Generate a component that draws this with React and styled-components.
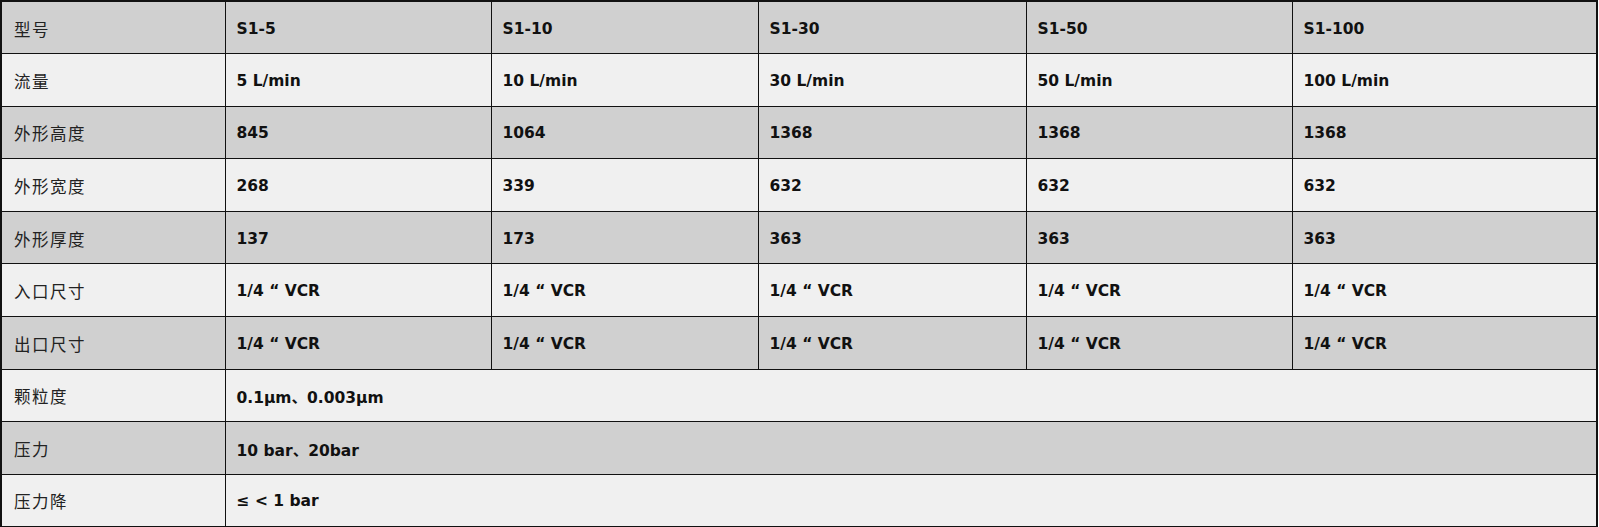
import React from "react";
import styled, { createGlobalStyle } from "styled-components";

const Global = createGlobalStyle`
  html, body { margin: 0; padding: 0; background: #ffffff; }
  body { font-family: "DejaVu Sans", "Noto Sans CJK SC", sans-serif; }
`;

const Table = styled.table`
  width: 1598px;
  height: 526px;
  table-layout: fixed;
  border-collapse: collapse;
  border: 2px solid #111;
`;

const Row = styled.tr`
  height: 52.6px;
  background: ${(p) => (p.$shade ? "#d0d0d0" : "#f0f0f0")};
`;

const Label = styled.td`
  border: 1.5px solid #111;
  padding: 2px 0 0 12px;
  font-size: 16.5px;
  letter-spacing: 1.5px;
  font-weight: 400;
  color: #222;
  font-family: "Noto Sans CJK SC", sans-serif;
  vertical-align: middle;
  white-space: nowrap;
`;

const Value = styled.td`
  border: 1.5px solid #111;
  padding: 2px 0 0 11px;
  font-size: 15.5px;
  font-weight: 700;
  color: #111;
  font-family: "DejaVu Sans", "Noto Sans CJK SC", sans-serif;
  vertical-align: middle;
  white-space: nowrap;
`;

const Col = styled.col`
  width: ${(p) => p.$w};
`;

const rows = [
  ["型号", ["S1-5", "S1-10", "S1-30", "S1-50", "S1-100"]],
  ["流量", ["5 L/min", "10 L/min", "30 L/min", "50 L/min", "100 L/min"]],
  ["外形高度", ["845", "1064", "1368", "1368", "1368"]],
  ["外形宽度", ["268", "339", "632", "632", "632"]],
  ["外形厚度", ["137", "173", "363", "363", "363"]],
  ["入口尺寸", ["1/4 “ VCR", "1/4 “ VCR", "1/4 “ VCR", "1/4 “ VCR", "1/4 “ VCR"]],
  ["出口尺寸", ["1/4 “ VCR", "1/4 “ VCR", "1/4 “ VCR", "1/4 “ VCR", "1/4 “ VCR"]],
  ["颗粒度", ["0.1μm、0.003μm"]],
  ["压力", ["10 bar、20bar"]],
  ["压力降", ["≤ < 1 bar"]],
];

export default function App() {
  return (
    <>
      <Global />
      <Table>
        <colgroup>
          <Col $w="224px" />
          <Col $w="266px" />
          <Col $w="267px" />
          <Col $w="268px" />
          <Col $w="266px" />
          <Col $w="auto" />
        </colgroup>
        <tbody>
          {rows.map(([label, vals], i) => (
            <Row key={label} $shade={i % 2 === 0}>
              <Label>{label}</Label>
              {vals.length === 1 ? (
                <Value colSpan={5}>{vals[0]}</Value>
              ) : (
                vals.map((v, j) => <Value key={j}>{v}</Value>)
              )}
            </Row>
          ))}
        </tbody>
      </Table>
    </>
  );
}
